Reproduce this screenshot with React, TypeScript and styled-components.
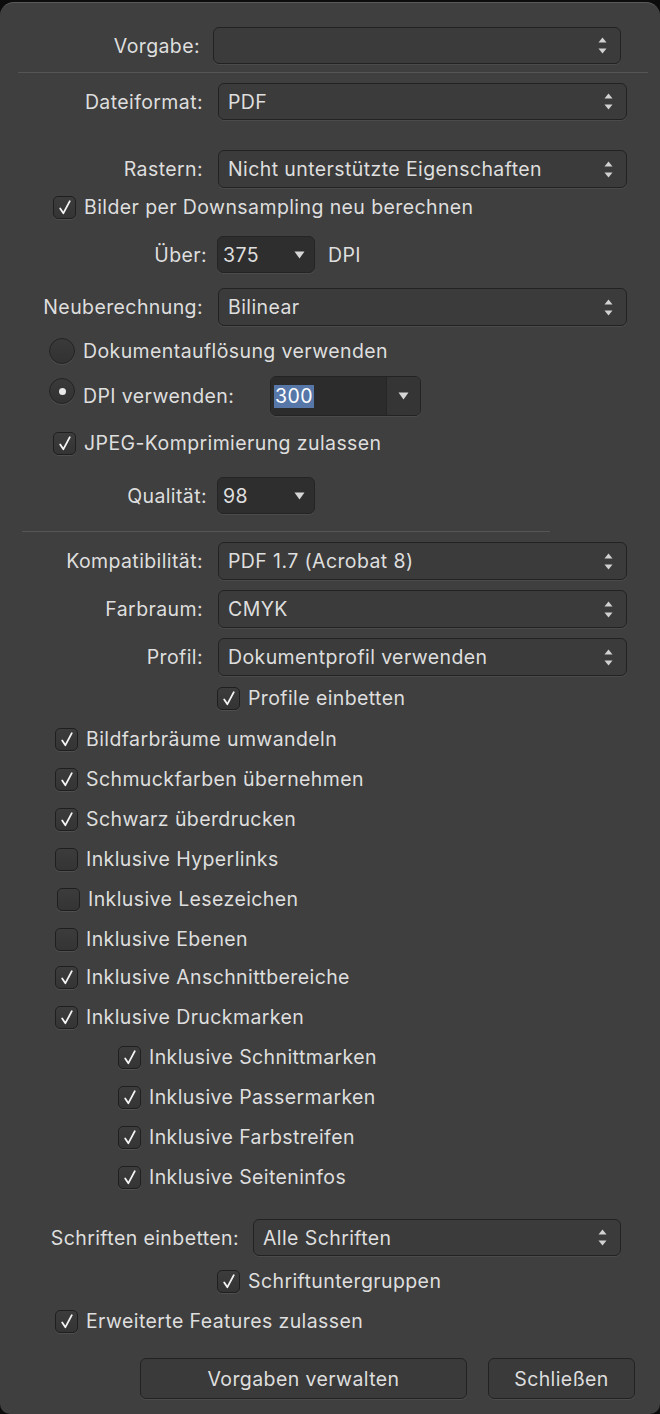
import styled, { createGlobalStyle } from "styled-components";

const GlobalStyle = createGlobalStyle`
  html, body {
    margin: 0;
    padding: 0;
    background: #0c0c0c;
  }
  body {
    font-family: Inter, "Noto Sans", sans-serif;
    -webkit-font-smoothing: antialiased;
  }
`;

const Panel = styled.div`
  margin-top: 2px;
  width: 660px;
  height: 1412px;
  box-sizing: border-box;
  padding-top: 24px;
  background: #3f3f3f;
  border-radius: 14px 14px 10px 10px;
  border-top: 1px solid #5a5a5a;
  color: #dedede;
  font-size: 19.5px;
  letter-spacing: 0.4px;
  display: flex;
  flex-direction: column;
`;

const Row = styled.div<{ $mt: number; $h: number; $pl?: number }>`
  display: flex;
  align-items: center;
  height: ${(p) => p.$h}px;
  margin-top: ${(p) => p.$mt}px;
  padding-left: ${(p) => p.$pl ?? 0}px;
  flex-shrink: 0;
`;

const Divider = styled.div<{ $mt: number; $l: number; $r: number }>`
  height: 1px;
  background: #555555;
  margin: ${(p) => p.$mt}px ${(p) => p.$r}px 0 ${(p) => p.$l}px;
  flex-shrink: 0;
`;

const Label = styled.span<{ $w: number }>`
  width: ${(p) => p.$w}px;
  text-align: right;
  flex-shrink: 0;
  white-space: nowrap;
`;

const Popup = styled.div<{ $gap: number; $right: number }>`
  flex: 1;
  align-self: stretch;
  margin-left: ${(p) => p.$gap}px;
  margin-right: ${(p) => p.$right}px;
  display: flex;
  align-items: center;
  justify-content: space-between;
  padding: 0 13px 0 9px;
  background: #3b3b3b;
  border: 1.5px solid #222222;
  border-radius: 6px;
  box-shadow: 0 1px 0 #4b4b4b;
  white-space: nowrap;
`;

const Combo = styled.div<{ $gap: number }>`
  width: 98px;
  box-sizing: border-box;
  align-self: stretch;
  margin-left: ${(p) => p.$gap}px;
  display: flex;
  align-items: center;
  justify-content: space-between;
  padding: 0 9px 0 5px;
  background: #2e2e2e;
  border: 1.5px solid #242424;
  border-radius: 6px;
  box-shadow: 0 1px 0 #4b4b4b;
`;

const Suffix = styled.span`
  margin-left: 13px;
`;

const DpiCombo = styled.div`
  width: 151px;
  height: 40px;
  box-sizing: border-box;
  display: flex;
  border: 1.5px solid #232323;
  border-radius: 6px;
  overflow: hidden;
  box-shadow: 0 1px 0 #4b4b4b;
`;

const DpiField = styled.div`
  flex: 1;
  background: #2c2c2c;
  display: flex;
  align-items: center;
  padding-left: 3px;
`;

const Selected = styled.span`
  background: #5677a8;
  color: #ffffff;
  padding: 0 1px;
  line-height: 23px;
`;

const DpiButton = styled.div`
  width: 33px;
  background: #353535;
  border-left: 1px solid #262626;
  display: flex;
  align-items: center;
  justify-content: center;
`;

const Box = styled.div`
  width: 23px;
  height: 23px;
  box-sizing: border-box;
  border-radius: 5px;
  border: 1.5px solid #1f1f1f;
  background: linear-gradient(#3c3c3c, #343434);
  box-shadow: 0 1px 0 #4e4e4e;
  display: flex;
  align-items: center;
  justify-content: center;
  flex-shrink: 0;
`;

const BoxText = styled.span`
  margin-left: 8px;
  white-space: nowrap;
`;

const Radio = styled.div<{ $raise?: boolean }>`
  width: 26px;
  height: 26px;
  box-sizing: border-box;
  border-radius: 50%;
  border: 1.5px solid #232323;
  background: linear-gradient(#3a3a3a, #323232);
  box-shadow: 0 1px 0 #4e4e4e;
  display: flex;
  align-items: center;
  justify-content: center;
  flex-shrink: 0;
  align-self: ${(p) => (p.$raise ? "flex-start" : "center")};
  margin-top: ${(p) => (p.$raise ? "2px" : "0")};
`;

const Dot = styled.div`
  width: 7px;
  height: 7px;
  border-radius: 50%;
  background: #e8e8e8;
`;

const RadioText = styled.span<{ $w?: number }>`
  margin-left: 8px;
  white-space: nowrap;
  width: ${(p) => (p.$w ? `${p.$w}px` : "auto")};
`;

const Footer = styled.div`
  display: flex;
  margin-top: 25px;
  padding-left: 140px;
  gap: 21px;
`;

const Button = styled.div<{ $w: number }>`
  width: ${(p) => p.$w}px;
  height: 41px;
  box-sizing: border-box;
  display: flex;
  align-items: center;
  justify-content: center;
  background: #3a3a3a;
  border: 1.5px solid #222222;
  border-radius: 6px;
  box-shadow: 0 1px 0 #4c4c4c;
`;

function Stepper() {
  return (
    <svg width="9" height="17" viewBox="0 0 9 17">
      <path d="M4.5 0.5 L8.5 5.5 H0.5 Z" fill="#d2d2d2" />
      <path d="M4.5 16.5 L8.5 11.5 H0.5 Z" fill="#d2d2d2" />
    </svg>
  );
}

function DownArrow() {
  return (
    <svg width="11" height="8" viewBox="0 0 11 8">
      <path d="M0.5 0.5 H10.5 L5.5 7.5 Z" fill="#d6d6d6" />
    </svg>
  );
}

function Check({ on }: { on: boolean }) {
  return (
    <Box>
      {on && (
        <svg width="16" height="17" viewBox="0 0 16 17">
          <path
            d="M3.2 9.4 L6.4 14.2 L12.8 2.2"
            stroke="#f4f4f4"
            strokeWidth="1.8"
            fill="none"
            strokeLinecap="round"
            strokeLinejoin="round"
          />
        </svg>
      )}
    </Box>
  );
}

type CheckItem = { text: string; on: boolean; mt: number; pl: number };

const optionList: CheckItem[] = [
  { text: "Bildfarbräume umwandeln", on: true, mt: 17, pl: 55 },
  { text: "Schmuckfarben übernehmen", on: true, mt: 16, pl: 55 },
  { text: "Schwarz überdrucken", on: true, mt: 16, pl: 55 },
  { text: "Inklusive Hyperlinks", on: false, mt: 16, pl: 55 },
  { text: "Inklusive Lesezeichen", on: false, mt: 16, pl: 57 },
  { text: "Inklusive Ebenen", on: false, mt: 16, pl: 55 },
  { text: "Inklusive Anschnittbereiche", on: true, mt: 14, pl: 55 },
  { text: "Inklusive Druckmarken", on: true, mt: 16, pl: 55 },
  { text: "Inklusive Schnittmarken", on: true, mt: 16, pl: 118 },
  { text: "Inklusive Passermarken", on: true, mt: 16, pl: 118 },
  { text: "Inklusive Farbstreifen", on: true, mt: 16, pl: 118 },
  { text: "Inklusive Seiteninfos", on: true, mt: 16, pl: 118 },
];

function PopupRow({
  label,
  value,
  mt,
  h = 38,
}: {
  label: string;
  value: string;
  mt: number;
  h?: number;
}) {
  return (
    <Row $mt={mt} $h={h}>
      <Label $w={203}>{label}</Label>
      <Popup $gap={15} $right={33}>
        <span>{value}</span>
        <Stepper />
      </Popup>
    </Row>
  );
}

function CheckRow({ text, on, mt, pl }: CheckItem) {
  return (
    <Row $mt={mt} $h={24} $pl={pl}>
      <Check on={on} />
      <BoxText>{text}</BoxText>
    </Row>
  );
}

export default function App() {
  return (
    <>
      <GlobalStyle />
      <Panel>
        <Row $mt={0} $h={37}>
          <Label $w={200}>Vorgabe:</Label>
          <Popup $gap={13} $right={39}>
            <span />
            <Stepper />
          </Popup>
        </Row>
        <Divider $mt={8} $l={18} $r={12} />

        <PopupRow label="Dateiformat:" value="PDF" mt={10} h={37} />
        <PopupRow label="Rastern:" value="Nicht unterstützte Eigenschaften" mt={30} />
        <CheckRow text="Bilder per Downsampling neu berechnen" on mt={7} pl={53} />

        <Row $mt={17} $h={37}>
          <Label $w={207}>Über:</Label>
          <Combo $gap={10}>
            <span>375</span>
            <DownArrow />
          </Combo>
          <Suffix>DPI</Suffix>
        </Row>

        <PopupRow label="Neuberechnung:" value="Bilinear" mt={15} />

        <Row $mt={12} $h={26} $pl={49}>
          <Radio />
          <RadioText>Dokumentauflösung verwenden</RadioText>
        </Row>
        <Row $mt={12} $h={40} $pl={49}>
          <Radio $raise>
            <Dot />
          </Radio>
          <RadioText $w={187}>DPI verwenden:</RadioText>
          <DpiCombo>
            <DpiField>
              <Selected>300</Selected>
            </DpiField>
            <DpiButton>
              <DownArrow />
            </DpiButton>
          </DpiCombo>
        </Row>

        <CheckRow text="JPEG-Komprimierung zulassen" on mt={15} pl={53} />

        <Row $mt={22} $h={37}>
          <Label $w={207}>Qualität:</Label>
          <Combo $gap={10}>
            <span>98</span>
            <DownArrow />
          </Combo>
        </Row>

        <Divider $mt={17} $l={22} $r={110} />

        <PopupRow label="Kompatibilität:" value="PDF 1.7 (Acrobat 8)" mt={10} />
        <PopupRow label="Farbraum:" value="CMYK" mt={10} />
        <PopupRow label="Profil:" value="Dokumentprofil verwenden" mt={10} />
        <CheckRow text="Profile einbetten" on mt={10} pl={217} />

        {optionList.map((item) => (
          <CheckRow key={item.text} {...item} />
        ))}

        <Row $mt={30} $h={37}>
          <Label $w={239}>Schriften einbetten:</Label>
          <Popup $gap={14} $right={39}>
            <span>Alle Schriften</span>
            <Stepper />
          </Popup>
        </Row>
        <CheckRow text="Schriftuntergruppen" on mt={13} pl={217} />
        <CheckRow text="Erweiterte Features zulassen" on mt={16} pl={55} />

        <Footer>
          <Button $w={327}>Vorgaben verwalten</Button>
          <Button $w={147}>Schließen</Button>
        </Footer>
      </Panel>
    </>
  );
}
